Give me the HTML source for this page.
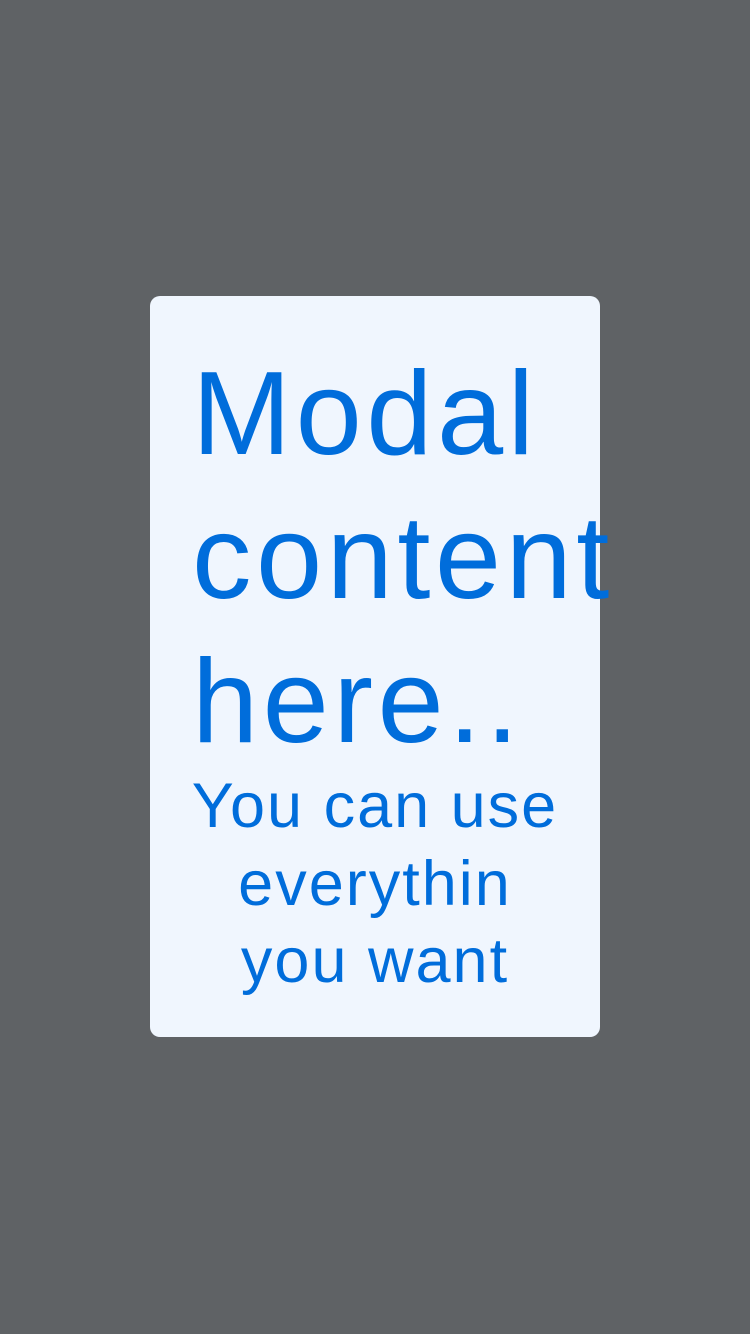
<!DOCTYPE html>
<html><head><meta charset="utf-8"><style>
html,body{margin:0;padding:0}
body{width:750px;height:1334px;background:#5f6265;position:relative;overflow:hidden;font-family:"Liberation Sans",sans-serif;color:#006ddb}
.box{position:absolute;left:150px;top:296px;width:450px;height:741px;background:#f0f6fe;border-radius:10px}
.big{position:absolute;left:192px;top:342px;font-size:119px;line-height:144px;white-space:nowrap;letter-spacing:4.5px}
.small{position:absolute;left:150px;width:450px;top:768px;font-size:63px;line-height:77.5px;text-align:center;letter-spacing:2px}
</style></head><body>
<div class="box"></div>
<div class="big">Modal<br>content<br>here..</div>
<div class="small">You can use<br>everythin<br>you want</div>
</body></html>
